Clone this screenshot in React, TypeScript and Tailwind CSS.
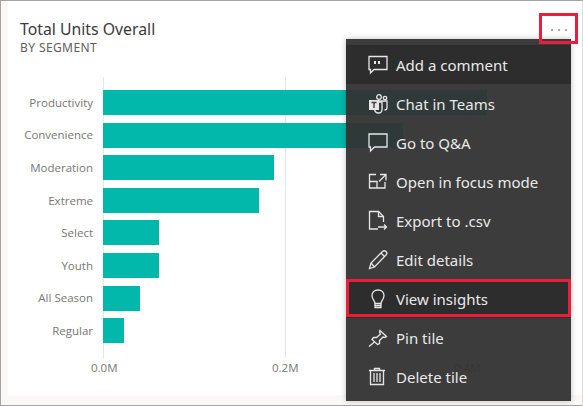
import React from "react";

const IconBase = ({ children }: { children: React.ReactNode }) => (
  <svg width="20" height="22" viewBox="0 0 20 22" fill="none" stroke="#e6e6e6" strokeWidth="1.3" className="shrink-0">
    {children}
  </svg>
);

const icons: Record<string, React.ReactNode> = {
  comment: (
    <IconBase>
      <path d="M1 2.5H19V15.5H6L2.5 19V15.5H1Z" />
      <path d="M7 7V10M11 7V10" strokeWidth="2" />
    </IconBase>
  ),
  teams: (
    <IconBase>
      <circle cx="11" cy="4" r="2.3" />
      <circle cx="17" cy="5" r="1.7" />
      <path d="M9 8H19V14.5C19 16 18 17 16.5 17" />
      <path d="M7 9H14V16.5C14 18.7 12.500 20 10.500 20C8.500 20 7 18.500 6.600 17" />
      <rect x="1" y="7" width="10" height="10" fill="#e6e6e6" stroke="none" />
      <path d="M3.500 9.500H8.500M6 9.500V15" stroke="#3e3e3e" strokeWidth="1.4" />
    </IconBase>
  ),
  qa: (
    <IconBase>
      <path d="M1 2H19V15H6.500L2.500 19V15H1Z" />
    </IconBase>
  ),
  focus: (
    <IconBase>
      <path d="M8 3.500H1.500V17H17V11" />
      <path d="M1.500 10.500H9V17" />
      <path d="M12 3.500H18V9.500M18 3.500L11 10.500" />
    </IconBase>
  ),
  export: (
    <IconBase>
      <path d="M10 19H1.500V1.500H10.500L15.500 6.500V12" />
      <path d="M10.500 1.500V6.500H15.500" />
      <path d="M10 17H18.500M16 14.500L18.500 17L16 19.500" />
    </IconBase>
  ),
  edit: (
    <IconBase>
      <path d="M1.500 19.500L3 14L14.500 2.500C15.500 1.500 17 1.500 18 2.500C19 3.500 19 5 18 6L6.500 18Z" />
      <path d="M3 14L6.500 18M13 4L16.500 7.500" />
    </IconBase>
  ),
  bulb: (
    <IconBase>
      <path d="M7 15.500C7 12.500 4 11.500 4 7.500C4 4.200 6.500 2 10 2C13.500 2 16 4.200 16 7.500C16 11.500 13 12.500 13 15.500Z" />
      <path d="M7 15.500V19.500H13V15.500M7 17.500H13" />
    </IconBase>
  ),
  pin: (
    <IconBase>
      <path d="M12 3.500L18.500 9.500L17 10.500L15 10L11.500 13.500L11.500 16.500L9.500 17.500L4 12.500L5.500 10.500H8.500L12.500 7L11.500 5Z" />
      <path d="M6.500 15L1 19.500" />
    </IconBase>
  ),
  trash: (
    <IconBase>
      <path d="M1 4.500H17M6.500 4.500V2.500H11.500V4.500" />
      <path d="M2.500 4.500V18.500H15.500V4.500" />
      <path d="M6 7V16M9 7V16M12 7V16" />
    </IconBase>
  ),
};

const rows: [string, number][] = [
  ["Productivity", 384],
  ["Convenience", 300],
  ["Moderation", 171],
  ["Extreme", 156],
  ["Select", 56],
  ["Youth", 56],
  ["All Season", 37],
  ["Regular", 21],
];

const items: [string, string, string][] = [
  ["comment", "Add a comment", "bg-[#2d2d2d]"],
  ["teams", "Chat in Teams", ""],
  ["qa", "Go to Q&A", ""],
  ["focus", "Open in focus mode", ""],
  ["export", "Export to .csv", ""],
  ["edit", "Edit details", ""],
  ["bulb", "View insights", "bg-[#2d2d2d]"],
  ["pin", "Pin tile", ""],
  ["trash", "Delete tile", ""],
];

export default function App() {
  return (
    <div className="relative h-[406px] w-[583px] overflow-hidden border-y border-l border-r border-[#a3a3a3] border-r-[#dcdcdc] bg-[#faf9f8] pb-[10px] pl-[7px] font-['Open_Sans',sans-serif]">
      <div className="h-full bg-white pl-[12px] pt-[18px]">
        <div className="text-[15.8px] leading-[20px] text-[#3b3a39] font-['Noto_Sans',sans-serif]">Total Units Overall</div>
        <div className="mt-[1px] text-[12px] leading-[16px] tracking-[0.4px] text-[#605e5c] font-['Noto_Sans',sans-serif]">BY SEGMENT</div>
        <div className="relative mt-[21px] flex flex-col gap-[7.6px] pl-[83px] pt-[13px]">
          <div className="absolute bottom-[18px] left-[83px] top-0 w-px bg-[#e6e6e6]" />
          <div className="absolute bottom-[18px] left-[265px] top-0 w-px bg-[#e6e6e6]" />
          <div className="absolute bottom-[18px] left-[447px] top-0 w-px bg-[#e6e6e6]" />
          {rows.map(([label, width]) => (
            <div key={label} className="relative flex h-[25px] items-center">
              <span className="absolute right-full mr-[10px] whitespace-nowrap text-[11.5px] text-[#777777]">{label}</span>
              <div className="relative h-full bg-[#01b8aa]" style={{ width }} />
            </div>
          ))}
          <div className="relative mt-[9px] h-[16px] text-[11.5px] leading-[16px] text-[#777777]">
            <span className="absolute left-[-12px]">0.0M</span>
            <span className="absolute left-[169px]">0.2M</span>
            <span className="absolute left-[351px]">0.4M</span>
          </div>
        </div>
      </div>

      <div className="absolute left-[345px] top-[38px] h-[362px] w-[225px] bg-[#323232f2] pt-[6px] shadow-[0_0_6px_rgba(0,0,0,0.25)]">
        {items.map(([icon, label, bg]) => (
          <div
            key={label}
            className={`flex h-[39px] items-center gap-[8px] pl-[22px] text-[15px] text-[#e9e9e9] font-['Noto_Sans',sans-serif] ${bg}`}
          >
            <span className="flex w-[20px] justify-center">{icons[icon]}</span>
            <span className="pt-[2px]">{label}</span>
          </div>
        ))}
      </div>

      <div className="absolute left-[345px] top-[278px] h-[38px] w-[225px] border-[3px] border-[#ec1c3b]" />

      <div className="absolute left-[538px] top-[12px] h-[31px] w-[39px] border-[3px] border-[#ec1c3b]" />
      <div className="absolute left-[550px] top-[28px] flex gap-[5px]">
        <span className="h-[2px] w-[2px] bg-[#a8a8a8]" />
        <span className="h-[2px] w-[2px] bg-[#a8a8a8]" />
        <span className="h-[2px] w-[2px] bg-[#a8a8a8]" />
      </div>
    </div>
  );
}
